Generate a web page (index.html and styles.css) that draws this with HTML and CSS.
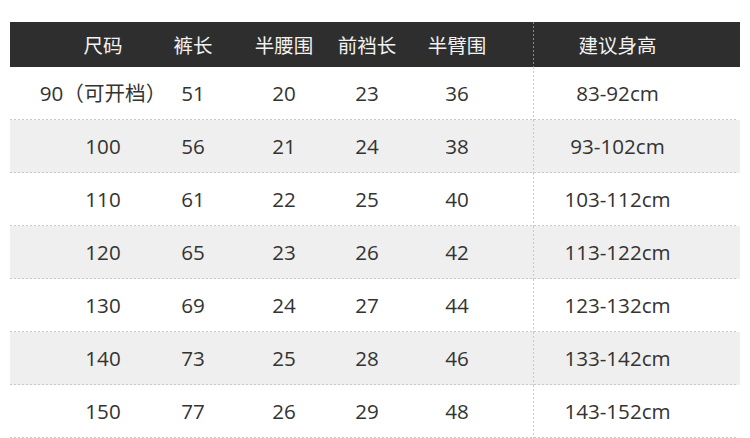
FILE: index.html
```html
<!DOCTYPE html>
<html lang="zh">
<head>
<meta charset="utf-8">
<title>尺码表</title>
<link rel="stylesheet" href="styles.css">
</head>
<body>
<div class="table">
  <div class="row head">
    <div class="c c1">尺码</div><div class="c c2">裤长</div><div class="c c3">半腰围</div><div class="c c4">前裆长</div><div class="c c5">半臂围</div><div class="c c6">建议身高</div>
  </div>
  <div class="row">
    <div class="c c1">90（可开档）</div><div class="c c2">51</div><div class="c c3">20</div><div class="c c4">23</div><div class="c c5">36</div><div class="c c6">83-92cm</div>
  </div>
  <div class="row alt">
    <div class="c c1">100</div><div class="c c2">56</div><div class="c c3">21</div><div class="c c4">24</div><div class="c c5">38</div><div class="c c6">93-102cm</div>
  </div>
  <div class="row">
    <div class="c c1">110</div><div class="c c2">61</div><div class="c c3">22</div><div class="c c4">25</div><div class="c c5">40</div><div class="c c6">103-112cm</div>
  </div>
  <div class="row alt">
    <div class="c c1">120</div><div class="c c2">65</div><div class="c c3">23</div><div class="c c4">26</div><div class="c c5">42</div><div class="c c6">113-122cm</div>
  </div>
  <div class="row">
    <div class="c c1">130</div><div class="c c2">69</div><div class="c c3">24</div><div class="c c4">27</div><div class="c c5">44</div><div class="c c6">123-132cm</div>
  </div>
  <div class="row alt">
    <div class="c c1">140</div><div class="c c2">73</div><div class="c c3">25</div><div class="c c4">28</div><div class="c c5">46</div><div class="c c6">133-142cm</div>
  </div>
  <div class="row">
    <div class="c c1">150</div><div class="c c2">77</div><div class="c c3">26</div><div class="c c4">29</div><div class="c c5">48</div><div class="c c6">143-152cm</div>
  </div>
</div>
</body>
</html>
```

FILE: styles.css
```css
html, body {
  margin: 0;
  padding: 0;
  background: #ffffff;
}
body {
  font-family: "Open Sans", "Noto Sans CJK SC", sans-serif;
  color: #333333;
}
.table {
  width: 730px;
  margin: 22px 0 0 10px;
}
.row {
  display: grid;
  grid-template-columns: 138px 90px 92px 74px 129px 207px;
  height: 53px;
  background-image: repeating-linear-gradient(to right, #c9c9c9 0 2px, transparent 2px 4px);
  background-size: 728px 1px;
  background-position: 0 100%;
  background-repeat: no-repeat;
}
.row.alt {
  background-color: #efefef;
}
.row.head {
  height: 45px;
  background: #2e2e2e;
  color: #f2f2f2;
}
.c {
  display: flex;
  align-items: center;
  justify-content: center;
  font-size: 20.6px;
  white-space: nowrap;
  line-height: 1;
  padding-bottom: 1px;
}
.head .c {
  font-family: "Noto Sans CJK SC", sans-serif;
  font-size: 19.5px;
  padding-bottom: 0;
}
.c1 {
  padding-left: 48px;
}
.c5 {
  padding-right: 23px;
}
.c6 {
  padding-right: 38px;
  background-image: repeating-linear-gradient(to bottom, #c9c9c9 0 2px, transparent 2px 4px);
  background-size: 1px 100%;
  background-position: 0 0;
  background-repeat: no-repeat;
}
.head .c6 {
  background-image: repeating-linear-gradient(to bottom, #8a8a8a 0 2px, transparent 2px 4px);
}
```
